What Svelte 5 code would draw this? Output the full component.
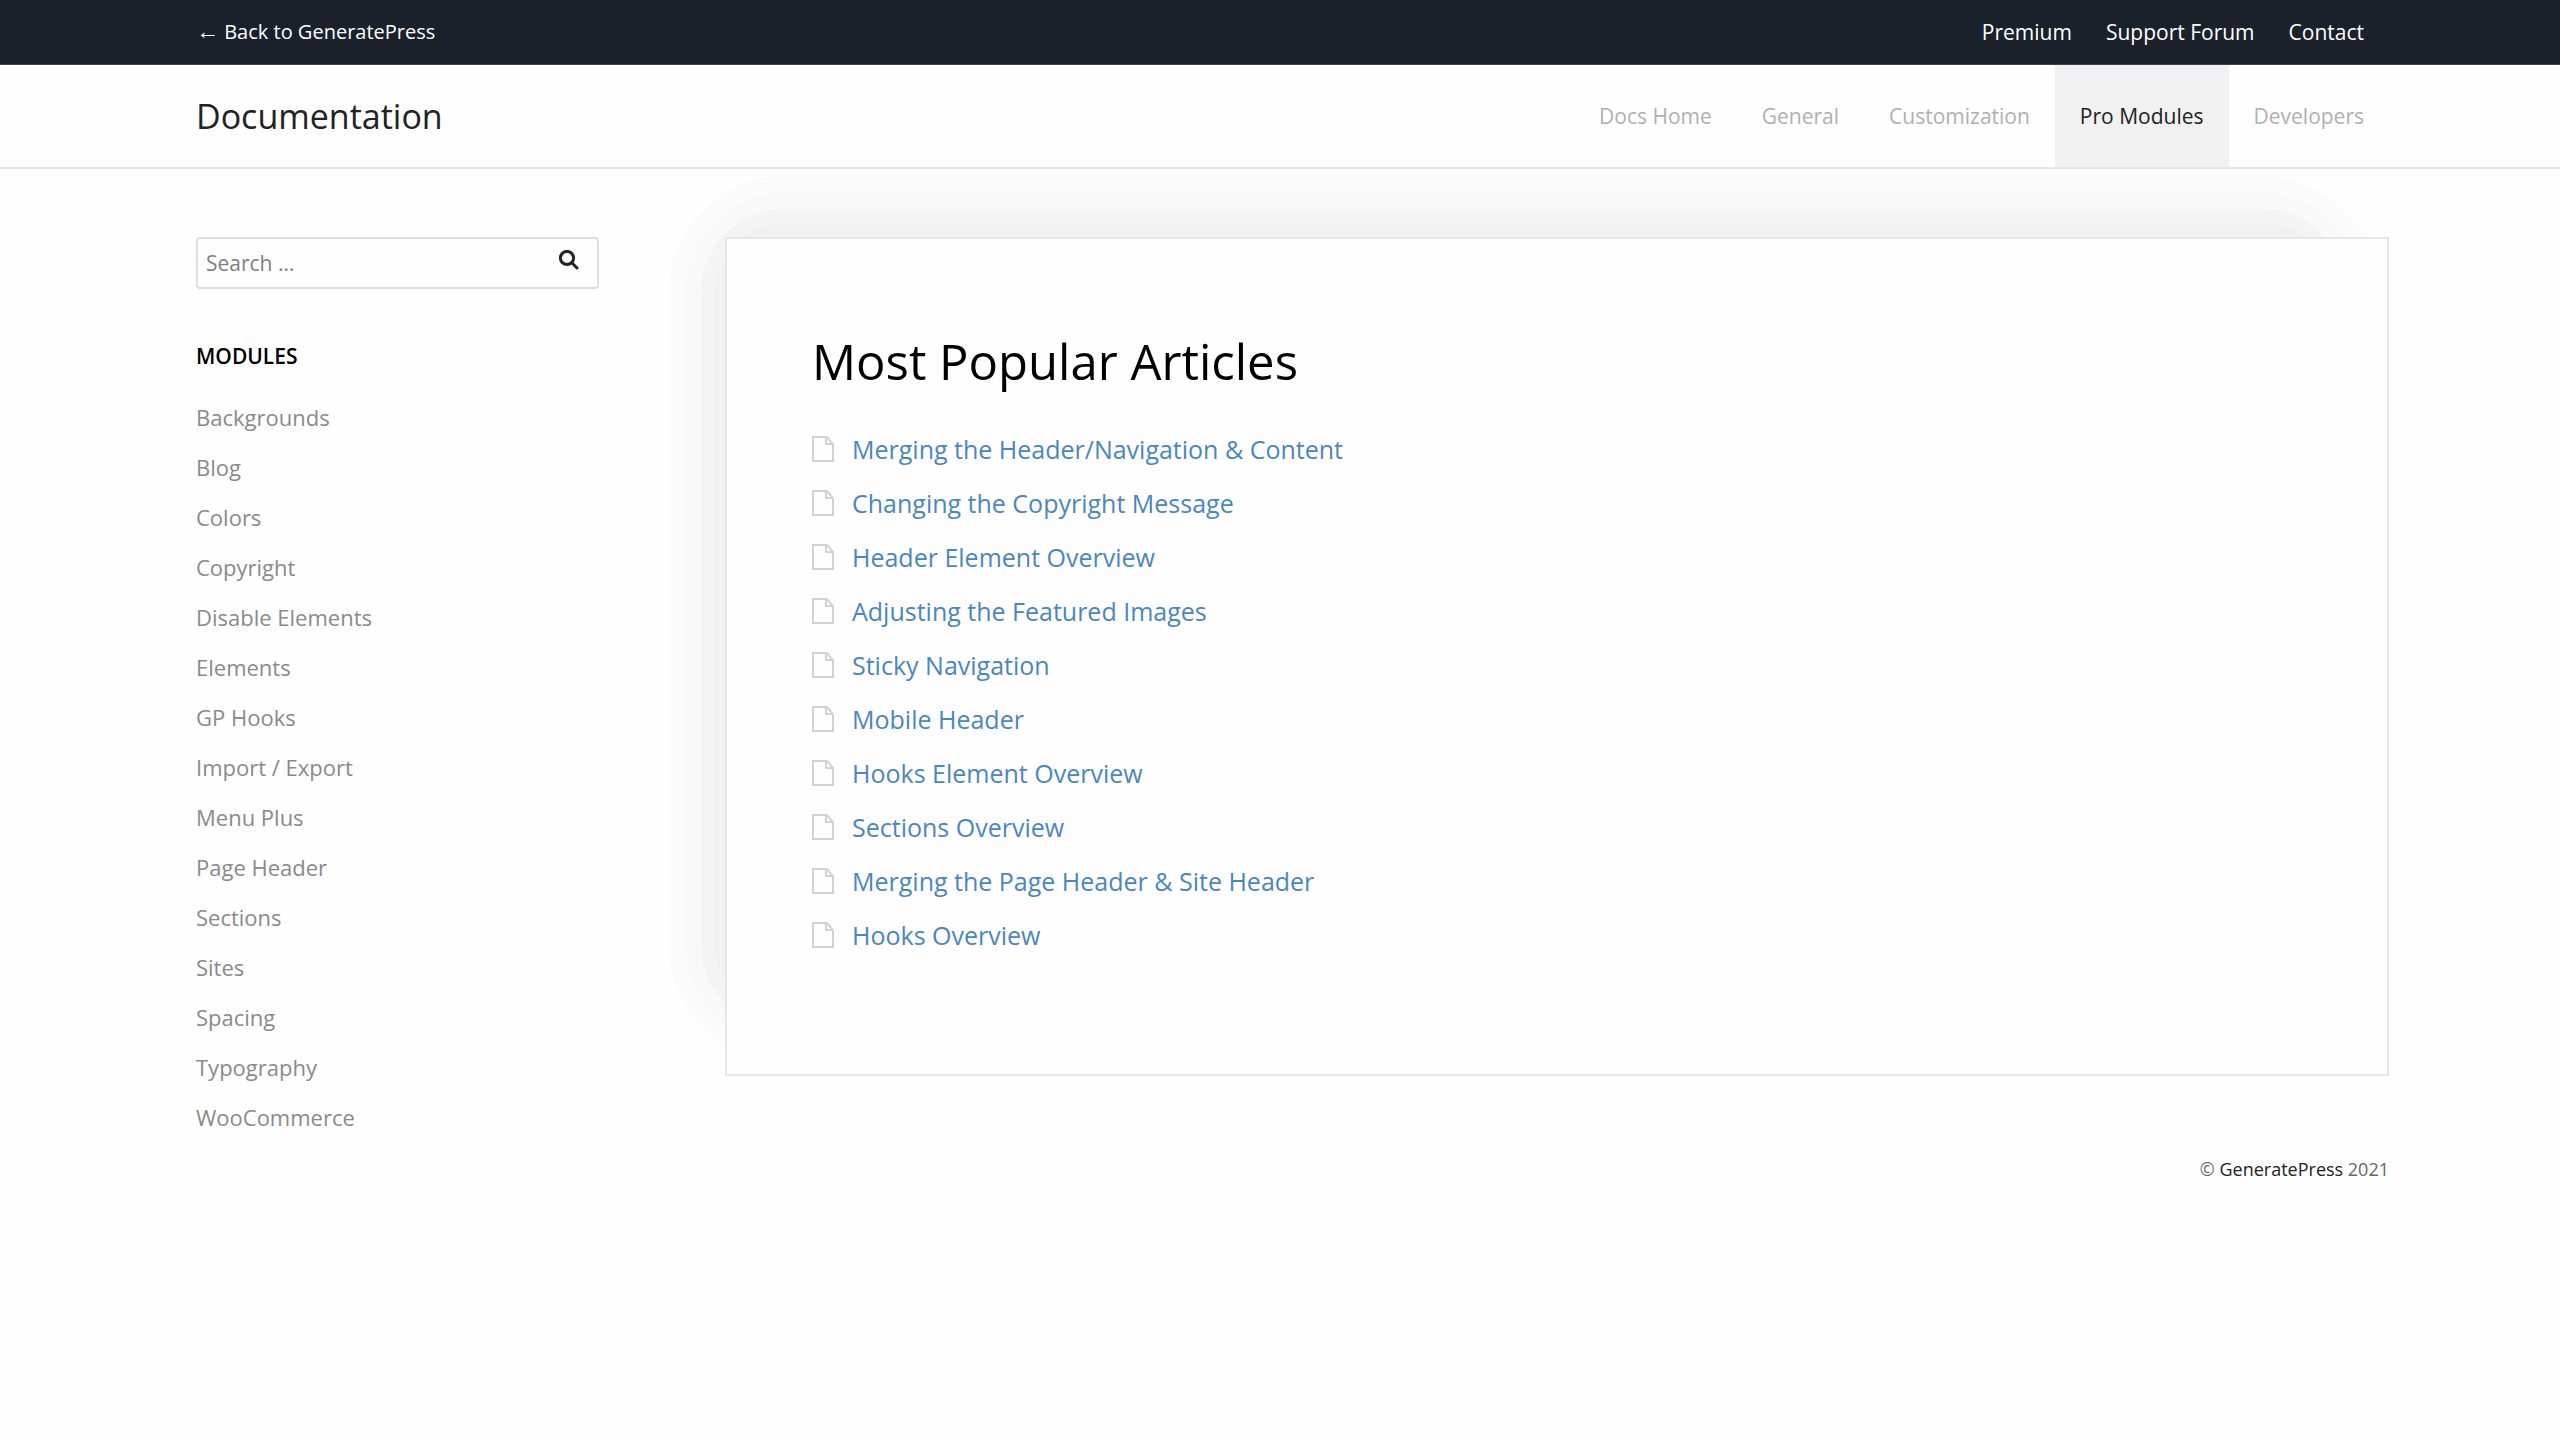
<script lang="ts">
	interface NavItem {
		label: string;
		active?: boolean;
	}

	const topLinks = ['Premium', 'Support Forum', 'Contact'];

	const navItems: NavItem[] = [
		{ label: 'Docs Home' },
		{ label: 'General' },
		{ label: 'Customization' },
		{ label: 'Pro Modules', active: true },
		{ label: 'Developers' }
	];

	const modules = [
		'Backgrounds',
		'Blog',
		'Colors',
		'Copyright',
		'Disable Elements',
		'Elements',
		'GP Hooks',
		'Import / Export',
		'Menu Plus',
		'Page Header',
		'Sections',
		'Sites',
		'Spacing',
		'Typography',
		'WooCommerce'
	];

	const articles = [
		'Merging the Header/Navigation & Content',
		'Changing the Copyright Message',
		'Header Element Overview',
		'Adjusting the Featured Images',
		'Sticky Navigation',
		'Mobile Header',
		'Hooks Element Overview',
		'Sections Overview',
		'Merging the Page Header & Site Header',
		'Hooks Overview'
	];

	let query = $state('');
</script>

<svelte:head>
	<title>Pro Modules | Documentation</title>
</svelte:head>

<div class="top-bar">
	<div class="container">
		<a href="/" class="back"><span class="arrow">←</span> Back to GeneratePress</a>
		<nav class="top-links" aria-label="Top">
			{#each topLinks as label}
				<a href="/">{label}</a>
			{/each}
		</nav>
	</div>
</div>

<header>
	<div class="container">
		<a href="/" class="site-title">Documentation</a>
		<nav class="main-nav" aria-label="Main">
			{#each navItems as item}
				<a href="/" class:active={item.active}>{item.label}</a>
			{/each}
		</nav>
	</div>
</header>

<div class="container page">
	<aside>
		<form class="search" role="search" onsubmit={(e) => e.preventDefault()}>
			<input type="search" placeholder="Search …" aria-label="Search" bind:value={query} />
			<button type="submit" aria-label="Search">
				<svg viewBox="0 0 20 20" aria-hidden="true">
					<circle cx="8" cy="8" r="6.6" />
					<path d="M12.8 12.8 L18 18" />
				</svg>
			</button>
		</form>

		<h2>Modules</h2>
		<ul class="modules">
			{#each modules as label}
				<li><a href="/">{label}</a></li>
			{/each}
		</ul>
	</aside>

	<div class="content">
		<main>
			<h1>Most Popular Articles</h1>
			<ul class="articles">
				{#each articles as label}
					<li>
						<svg viewBox="0 0 22 26" aria-hidden="true">
							<path d="M1 1 H15 L21 8 V25 H1 Z M14 1 V8 H21" />
						</svg>
						<a href="/">{label}</a>
					</li>
				{/each}
			</ul>
		</main>
		<footer>© <a href="/">GeneratePress</a> 2021</footer>
	</div>
</div>

<style>
	:global(body) {
		margin: 0;
		background: #fefefe;
		color: #3a3a3a;
		font-family: 'Open Sans', 'Noto Sans', sans-serif;
	}

	a {
		color: inherit;
		text-decoration: none;
	}

	ul {
		margin: 0;
		padding: 0;
		list-style: none;
	}

	.container {
		display: flex;
		justify-content: space-between;
		box-sizing: border-box;
		max-width: 2218px;
		margin: 0 auto;
		padding: 0 25px;
	}

	.top-bar {
		background: #1b212b;
		border-bottom: 1px solid #3c434d;
		color: #fff;
		font-size: 21px;
		line-height: 64px;
	}

	.back {
		font-size: 20px;
	}

	.arrow {
		font-family: 'Liberation Sans', sans-serif;
		font-size: 23px;
		line-height: 1;
	}

	.top-links {
		display: flex;
		gap: 34px;
	}

	header {
		border-bottom: 2px solid #e8e8e8;
		line-height: 102px;
	}

	.site-title {
		color: #222;
		font-size: 34px;
	}

	.main-nav {
		display: flex;
		color: #b0b0b0;
		font-size: 21px;
	}

	.main-nav a {
		padding: 0 25px;
	}

	.main-nav a:last-child {
		padding-right: 0;
	}

	.main-nav .active {
		background: #f1f1f1;
		color: #222;
	}

	.page {
		gap: 126px;
		padding: 68px 0 0 25px;
	}

	aside {
		flex: none;
		width: 403px;
	}

	.search {
		display: flex;
		box-sizing: border-box;
		height: 52px;
		border: 2px solid #dedede;
		border-radius: 4px;
	}

	.search input {
		flex: 1;
		min-width: 0;
		padding: 0 8px;
		border: 0;
		outline: 0;
		background: none;
		font: inherit;
		font-size: 21px;
	}

	.search input::placeholder {
		color: #808080;
		opacity: 1;
	}

	.search button {
		display: flex;
		padding: 11px 18px;
		border: 0;
		background: none;
	}

	.search svg {
		width: 20px;
		height: 20px;
		fill: none;
		stroke: #222;
		stroke-width: 3;
		stroke-linecap: round;
	}

	h2 {
		margin: 50px 0 19px;
		color: #000;
		font-size: 21px;
		font-weight: 600;
		line-height: 34px;
		text-transform: uppercase;
	}

	.modules {
		color: #8a8a8a;
		font-size: 22px;
		line-height: 50px;
	}

	.content {
		flex: 1;
		isolation: isolate;
	}

	main {
		position: relative;
		padding: 84px 85px 112px;
		border: 2px solid #e9e5e6;
		background: #fefefe;
	}

	/* stepped halo behind the top left of the panel */
	main::before {
		content: '';
		position: absolute;
		inset: -62px 10px 14px -58px;
		z-index: -1;
		border-radius: 115px;
		background: #f1f1f1;
		box-shadow:
			inset 0 0 0 16px #fbfbfb,
			inset 0 0 0 32px #f9f9f9,
			inset 0 0 0 46px #f4f4f4;
	}

	h1 {
		margin: 0 0 23px;
		color: #000;
		font-size: 49px;
		font-weight: 400;
		line-height: 76px;
	}

	.articles {
		font-size: 25px;
		line-height: 54px;
	}

	.articles li {
		display: flex;
		align-items: center;
		gap: 18px;
	}

	.articles svg {
		width: 22px;
		height: 26px;
		fill: none;
		stroke: #d2d2d2;
		stroke-width: 2;
	}

	.articles a {
		color: #4a87bd;
	}

	footer {
		margin-top: 75px;
		color: #666;
		font-size: 18px;
		line-height: 36px;
		text-align: right;
	}

	footer a {
		color: #222;
	}
</style>
